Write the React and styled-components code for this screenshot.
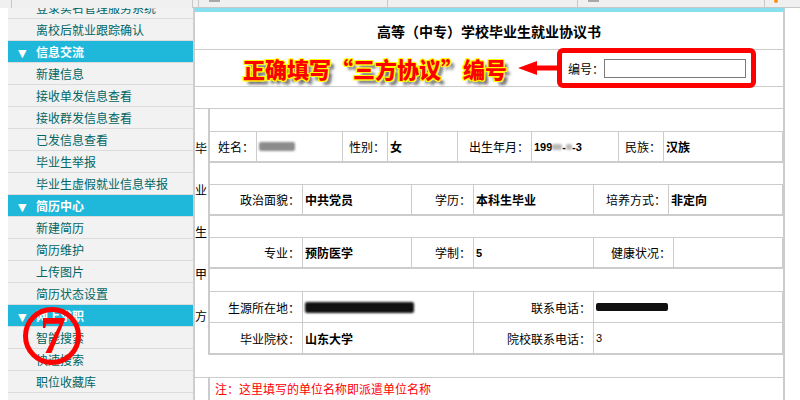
import React from "react";
import styled, { createGlobalStyle } from "styled-components";

const GlobalStyle = createGlobalStyle`
  html, body {
    margin: 0;
    padding: 0;
    background: #ffffff;
  }
  body {
    font-family: "Noto Sans CJK SC", "Liberation Sans", sans-serif;
    font-size: 12px;
    color: #000000;
  }
`;

const menu = [
    { label: "登录实名管理服务系统" },
    { label: "离校后就业跟踪确认" },
    { label: "信息交流", header: true },
    { label: "新建信息" },
    { label: "接收单发信息查看" },
    { label: "接收群发信息查看" },
    { label: "已发信息查看" },
    { label: "毕业生举报" },
    { label: "毕业生虚假就业信息举报" },
    { label: "简历中心", header: true },
    { label: "新建简历" },
    { label: "简历维护" },
    { label: "上传图片" },
    { label: "简历状态设置" },
    { label: "网上求职", header: true },
    { label: "智能搜索" },
    { label: "快速搜索" },
    { label: "职位收藏库" },
];

const strip = [
    { w: 12 },
    { w: 181 },
    { w: 6, under: true },
    { w: 189, under: true, mark: true },
    { w: 190, under: true },
    { w: 187, under: true, mark: true },
    { w: 35, under: true, dot: true, last: true },
];

const Page = styled.div`
    width: 800px;
    height: 400px;
    overflow: hidden;
    display: flex;
    flex-direction: column;
    background: #ffffff;
`;

const TopStrip = styled.div`
    height: 8px;
    flex-shrink: 0;
    display: flex;
    background: #f0f0f0;
`;

const StripCell = styled.div`
    box-sizing: border-box;
    width: ${(p) => p.w}px;
    height: 8px;
    border-right: ${(p) => (p.last ? "none" : "1px solid #c8c8c8")};
    border-bottom: ${(p) => (p.under ? "1px solid #c8c8c8" : "none")};
    display: flex;
    align-items: flex-start;
`;

const StripMark = styled.span`
    display: block;
    width: 11px;
    height: 2px;
    margin-left: 10px;
    background: #a8a8a8;
`;

const StripDot = styled.span`
    display: block;
    width: 4px;
    height: 3px;
    margin-left: 9px;
    border-radius: 0 0 2px 2px;
    background: #f7931e;
`;

const Body = styled.div`
    flex: 1;
    min-height: 0;
    display: flex;
`;

const Gutter = styled.div`
    width: 8px;
    flex-shrink: 0;
`;

const Sidebar = styled.nav`
    position: relative;
    box-sizing: border-box;
    width: 186px;
    flex-shrink: 0;
    overflow: hidden;
    background: #f2f2f2;
    border-right: 1px solid #cfcfcf;
`;

const Menu = styled.div`
    margin-top: -11px;
`;

const MenuItem = styled.div`
    box-sizing: border-box;
    height: 22px;
    line-height: 21px;
    padding-left: 28px;
    border-bottom: 1px solid #dcdcdc;
    color: #006666;
    white-space: nowrap;
`;

const MenuHeader = styled(MenuItem)`
    padding-left: 10px;
    background: #1fb8da;
    color: #ffffff;
    font-weight: bold;
`;

const Caret = styled.span`
    display: inline-block;
    width: 18px;
    font-size: 11px;
    font-family: "DejaVu Sans", sans-serif;
`;

const Badge = styled.div`
    position: absolute;
    left: 15px;
    top: 299px;
    box-sizing: border-box;
    width: 58px;
    height: 58px;
    border: 5px solid #ff0000;
    border-radius: 50%;
    display: flex;
    align-items: center;
    justify-content: center;
    color: #ff0000;
    font-family: "Liberation Serif", serif;
    font-weight: bold;
    font-size: 52px;
    line-height: 1;
    padding-left: 2px;
`;

const Main = styled.main`
    flex: 1;
    display: flex;
    flex-direction: column;
`;

const Panel = styled.section`
    box-sizing: border-box;
    width: 591px;
    flex: 1;
    border-left: 1px solid #cccccc;
    border-right: 2px solid #cccccc;
    border-top: 4px solid #88dff0;
    display: flex;
    flex-direction: column;
`;

const TitleRow = styled.div`
    box-sizing: border-box;
    height: 38px;
    flex-shrink: 0;
    border-bottom: 1px solid #cccccc;
    display: flex;
    align-items: center;
    justify-content: center;
    font-size: 14px;
    font-weight: bold;
    padding-top: 1px;
`;

const NumberRow = styled.div`
    box-sizing: border-box;
    height: 37px;
    flex-shrink: 0;
    border-bottom: 1px solid #cccccc;
    display: flex;
    align-items: center;
    padding-left: 48px;
`;

const Callout = styled.span`
    font-size: 22px;
    font-weight: 900;
    color: #ff0000;
    white-space: nowrap;
    text-shadow: 1px 0 #ffff00, -1px 0 #ffff00, 0 1px #ffff00, 0 -1px #ffff00,
        1px 1px #ffff00, -1px -1px #ffff00, 1px -1px #ffff00, -1px 1px #ffff00,
        4px 4px 3px #6a6a6a;
`;

const Arrow = styled.svg`
    margin-left: 11px;
    flex-shrink: 0;
`;

const NumberBox = styled.div`
    position: relative;
    z-index: 1;
    box-sizing: border-box;
    width: 199px;
    height: 40px;
    flex-shrink: 0;
    border: 5px solid #ff0000;
    border-radius: 6px;
    background: #ffffff;
    display: flex;
    align-items: center;
    padding-left: 6px;
`;

const NumberLabel = styled.span`
    width: 36px;
    flex-shrink: 0;
`;

const NumberInput = styled.input`
    box-sizing: border-box;
    width: 142px;
    height: 19px;
    margin: 0;
    border: 1px solid #7a7a7a;
    background: #ffffff;
`;

const EmptyRow = styled.div`
    box-sizing: border-box;
    height: ${(p) => p.h}px;
    flex-shrink: 0;
    border-bottom: 1px solid #cccccc;
`;

const PartyBlock = styled.div`
    height: 246px;
    flex-shrink: 0;
    display: flex;
`;

const SideLabel = styled.div`
    width: 13px;
    flex-shrink: 0;
    display: flex;
    flex-direction: column;
    justify-content: center;
    line-height: 42px;
    overflow: hidden;
`;

const PartyBody = styled.div`
    flex: 1;
    border-left: 2px solid #cccccc;
    display: flex;
    flex-direction: column;
`;

const Gap = styled.div`
    height: ${(p) => p.h}px;
    flex-shrink: 0;
`;

const InfoTable = styled.div`
    display: grid;
    grid-template-columns: ${(p) => p.cols};
    grid-auto-rows: ${(p) => p.rowH}px;
    gap: 1px;
    background: #cccccc;
    border-top: 1px solid #cccccc;
    border-bottom: 2px solid #cccccc;
    padding-right: 1px;
    flex-shrink: 0;
`;

const Cell = styled.div`
    background: #ffffff;
    display: flex;
    align-items: center;
    justify-content: ${(p) => (p.label ? "flex-end" : "flex-start")};
    padding: ${(p) => (p.label ? "0 2px 0 0" : "0 0 0 2px")};
    font-weight: ${(p) => (p.strong ? "bold" : "normal")};
    white-space: nowrap;
    overflow: hidden;
`;

const Digits = styled.span`
    font-family: "Liberation Sans", sans-serif;
    font-size: 11px;
    font-weight: ${(p) => (p.strong ? "bold" : "normal")};
`;

const Smudge = styled.span`
    display: inline-block;
    width: ${(p) => p.w}px;
    height: ${(p) => p.h}px;
    background: ${(p) => p.c};
    filter: blur(${(p) => p.blur}px);
    border-radius: 2px;
`;

const NoteRow = styled.div`
    box-sizing: border-box;
    height: 23px;
    flex-shrink: 0;
    display: flex;
    border-bottom: 1px solid #cccccc;
`;

const NoteSide = styled.div`
    width: 13px;
    flex-shrink: 0;
    border-right: 2px solid #cccccc;
`;

const NoteText = styled.div`
    padding-left: 5px;
    line-height: 22px;
    color: #ff0000;
`;

export default function App() {
    return (
        <Page lang="zh-CN">
            <GlobalStyle />
            <TopStrip>
                {strip.map((s, i) => (
                    <StripCell key={i} w={s.w} under={s.under} last={s.last}>
                        {s.mark && <StripMark />}
                        {s.dot && <StripDot />}
                    </StripCell>
                ))}
            </TopStrip>
            <Body>
                <Gutter />
                <Sidebar>
                    <Menu>
                        {menu.map((m, i) =>
                            m.header ? (
                                <MenuHeader key={i}>
                                    <Caret>▼</Caret>
                                    {m.label}
                                </MenuHeader>
                            ) : (
                                <MenuItem key={i}>{m.label}</MenuItem>
                            )
                        )}
                    </Menu>
                    <Badge>7</Badge>
                </Sidebar>
                <Main>
                    <Panel>
                        <TitleRow>高等（中专）学校毕业生就业协议书</TitleRow>
                        <NumberRow>
                            <Callout>正确填写“三方协议”编号</Callout>
                            <Arrow width="39" height="14" viewBox="0 0 39 14">
                                <polygon
                                    points="0,7 19,0 19,4.5 39,4.5 39,9.5 19,9.5 19,14"
                                    fill="#ff0000"
                                />
                            </Arrow>
                            <NumberBox>
                                <NumberLabel>编号：</NumberLabel>
                                <NumberInput type="text" />
                            </NumberBox>
                        </NumberRow>
                        <EmptyRow h={22} />
                        <PartyBlock>
                            <SideLabel>
                                <span>毕</span>
                                <span>业</span>
                                <span>生</span>
                                <span>甲</span>
                                <span>方</span>
                            </SideLabel>
                            <PartyBody>
                                <Gap h={22} />
                                <InfoTable rowH={29} cols="46px 85px 44px 69px 73px 86px 44px 1fr">
                                    <Cell label>姓名：</Cell>
                                    <Cell>
                                        <Smudge w={36} h={9} c="#8c8c8c" blur={1.2} />
                                    </Cell>
                                    <Cell label>性别：</Cell>
                                    <Cell strong>女</Cell>
                                    <Cell label>出生年月：</Cell>
                                    <Cell>
                                        <Digits strong>199</Digits>
                                        <Smudge w={10} h={6} c="#b8b8b8" blur={1} />
                                        <Digits strong>-</Digits>
                                        <Smudge w={6} h={6} c="#b8b8b8" blur={1} />
                                        <Digits strong>-3</Digits>
                                    </Cell>
                                    <Cell label>民族：</Cell>
                                    <Cell strong>汉族</Cell>
                                </InfoTable>
                                <Gap h={21} />
                                <InfoTable rowH={29} cols="92px 108px 61px 119px 74px 1fr">
                                    <Cell label>政治面貌：</Cell>
                                    <Cell strong>中共党员</Cell>
                                    <Cell label>学历：</Cell>
                                    <Cell strong>本科生毕业</Cell>
                                    <Cell label>培养方式：</Cell>
                                    <Cell strong>非定向</Cell>
                                </InfoTable>
                                <Gap h={21} />
                                <InfoTable rowH={29} cols="92px 108px 61px 119px 79px 1fr">
                                    <Cell label>专业：</Cell>
                                    <Cell strong>预防医学</Cell>
                                    <Cell label>学制：</Cell>
                                    <Cell>
                                        <Digits strong>5</Digits>
                                    </Cell>
                                    <Cell label>健康状况：</Cell>
                                    <Cell />
                                </InfoTable>
                                <Gap h={22} />
                                <InfoTable rowH={30} cols="92px 170px 119px 1fr">
                                    <Cell label>生源所在地：</Cell>
                                    <Cell>
                                        <Smudge w={109} h={11} c="#111111" blur={0.8} />
                                    </Cell>
                                    <Cell label>联系电话：</Cell>
                                    <Cell>
                                        <Smudge w={72} h={8} c="#111111" blur={0.6} />
                                    </Cell>
                                    <Cell label>毕业院校：</Cell>
                                    <Cell strong>山东大学</Cell>
                                    <Cell label>院校联系电话：</Cell>
                                    <Cell>
                                        <Digits>3</Digits>
                                    </Cell>
                                </InfoTable>
                            </PartyBody>
                        </PartyBlock>
                        <EmptyRow h={23} />
                        <NoteRow>
                            <NoteSide />
                            <NoteText>注：这里填写的单位名称即派遣单位名称</NoteText>
                        </NoteRow>
                    </Panel>
                </Main>
            </Body>
        </Page>
    );
}
